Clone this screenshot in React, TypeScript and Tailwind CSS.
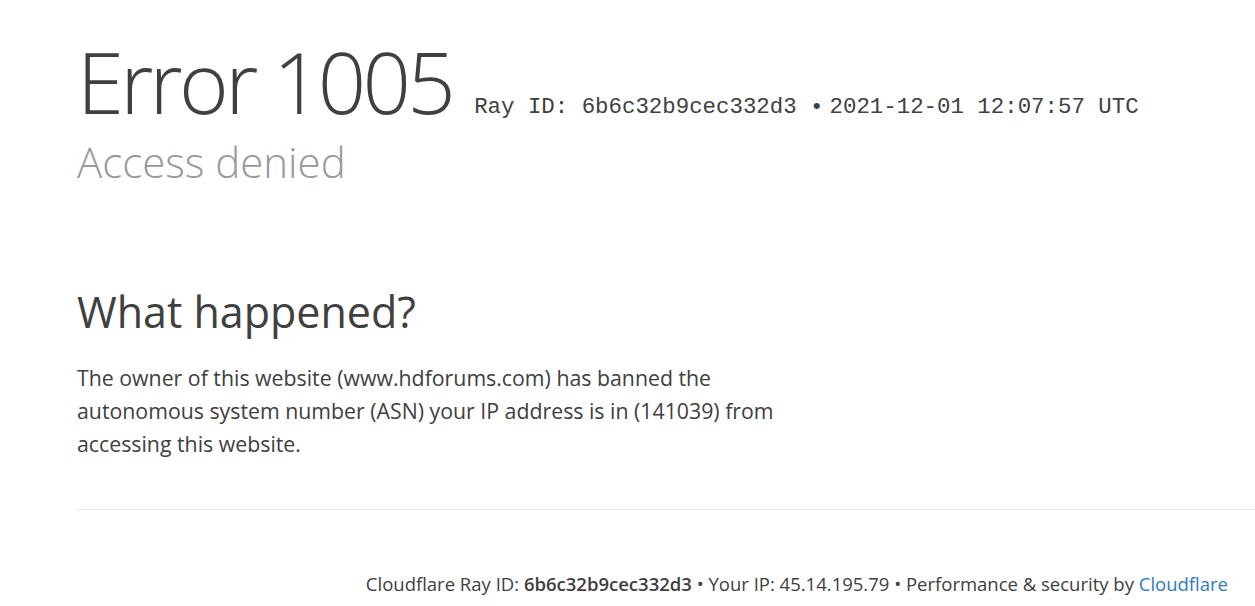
export default function App() {
  const sans = { fontFamily: '"Open Sans", "Noto Sans", sans-serif' };
  return (
    <div className="min-h-[606px] w-full bg-white text-[#404040] overflow-hidden" style={sans}>
      <div className="pl-[77px]">
        <div className="pt-[38px] flex items-baseline">
          <h1 className="font-light text-[85px] leading-[86px] tracking-[-3.7px] text-[#404040]">Error 1005</h1>
          <span className="ml-[22px] text-[22.4px] text-[#404040] relative -top-[1px]" style={{ fontFamily: '"Liberation Mono", monospace' }}>
            Ray ID: 6b6c32b9cec332d3 •<span className="ml-[6px]">2021-12-01 12:07:57 UTC</span>
          </span>
        </div>
        <h2 className="font-light text-[42px] leading-[44px] text-[#999999] mt-[14px]">Access denied</h2>

        <h2 className="mt-[102px] text-[43px] leading-[52px] font-normal text-[#404040]">What happened?</h2>
        <p className="mt-[23px] w-[730px] text-[21.3px] leading-[33px] text-[#404040]">
          The owner of this website (www.hdforums.com) has banned the autonomous system number (ASN) your IP address is in (141039) from accessing this website.
        </p>

        <div className="mt-[49px] border-t border-[#ebebeb]" />
        <div className="pt-[62px] pr-[27px] text-right text-[18.5px] leading-[24px] text-[#404040]">
          Cloudflare Ray ID: <strong className="font-semibold">6b6c32b9cec332d3</strong> • Your IP: 45.14.195.79 • Performance &amp; security by{' '}
          <span className="text-[#2f7bbf]">Cloudflare</span>
        </div>
      </div>
    </div>
  );
}
